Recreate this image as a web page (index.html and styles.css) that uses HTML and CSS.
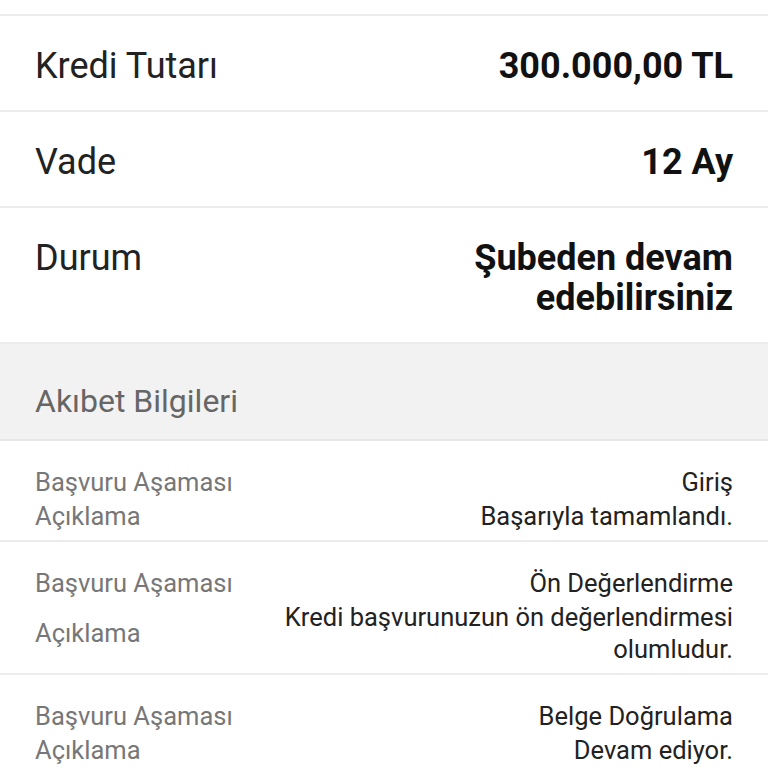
FILE: index.html
```html
<!DOCTYPE html>
<html lang="tr">
<head>
    <meta charset="UTF-8">
    <meta name="viewport" content="width=device-width, initial-scale=1.0">
    <title>Kredi Başvurusu</title>
    <link rel="stylesheet" href="styles.css">
</head>
<body>
    <div class="top"></div>
    <!-- başvuru özeti -->
    <div class="summary">
        <div class="row">
            <span class="label">Kredi Tutarı</span>
            <span class="value">300.000,00 TL</span>
        </div>
        <div class="row">
            <span class="label">Vade</span>
            <span class="value">12 Ay</span>
        </div>
        <div class="row">
            <span class="label">Durum</span>
            <span class="value">Şubeden devam edebilirsiniz</span>
        </div>
    </div>
    <!-- akıbet listesi -->
    <div class="section-title">Akıbet Bilgileri</div>
    <ul class="steps">
        <li>
            <span class="k">Başvuru Aşaması</span>
            <span class="v">Giriş</span>
            <span class="k">Açıklama</span>
            <span class="v">Başarıyla tamamlandı.</span>
        </li>
        <li>
            <span class="k">Başvuru Aşaması</span>
            <span class="v">Ön Değerlendirme</span>
            <span class="k">Açıklama</span>
            <span class="v">Kredi başvurunuzun ön değerlendirmesi olumludur.</span>
        </li>
        <li>
            <span class="k">Başvuru Aşaması</span>
            <span class="v">Belge Doğrulama</span>
            <span class="k">Açıklama</span>
            <span class="v">Devam ediyor.</span>
        </li>
    </ul>
</body>
</html>
```

FILE: styles.css
```css
* {
  margin: 0;
  padding: 0;
  box-sizing: border-box;
}
body {
  font-family: Roboto, "Noto Sans", sans-serif;
  background: #fff;
  color: #212121;
}
ul {
  list-style: none;
}
.top {
  height: 14px;
}
.summary .row {
  display: flex;
  justify-content: space-between;
  align-items: flex-start;
  padding: 30px 35px 24px;
  border-top: 2px solid #ececec;
  font-size: 36px;
  line-height: 40px;
}
.summary .label {
  color: #222;
}
.summary .value {
  max-width: 320px;
  text-align: right;
  font-weight: bold;
  color: #111;
}
.section-title {
  background: #f2f2f2;
  border-top: 2px solid #ececec;
  border-bottom: 2px solid #e6e6e6;
  padding: 37px 35px 18px;
  font-size: 32px;
  line-height: 40px;
  color: #666;
}
.steps li {
  display: grid;
  grid-template-columns: auto 1fr;
  align-items: center;
  column-gap: 30px;
  row-gap: 2px;
  padding: 25px 35px 8px;
  border-bottom: 2px solid #ececec;
  font-size: 25.5px;
  line-height: 32px;
}
.steps .k {
  color: #777;
}
.steps .v {
  text-align: right;
  color: #222;
}
```
